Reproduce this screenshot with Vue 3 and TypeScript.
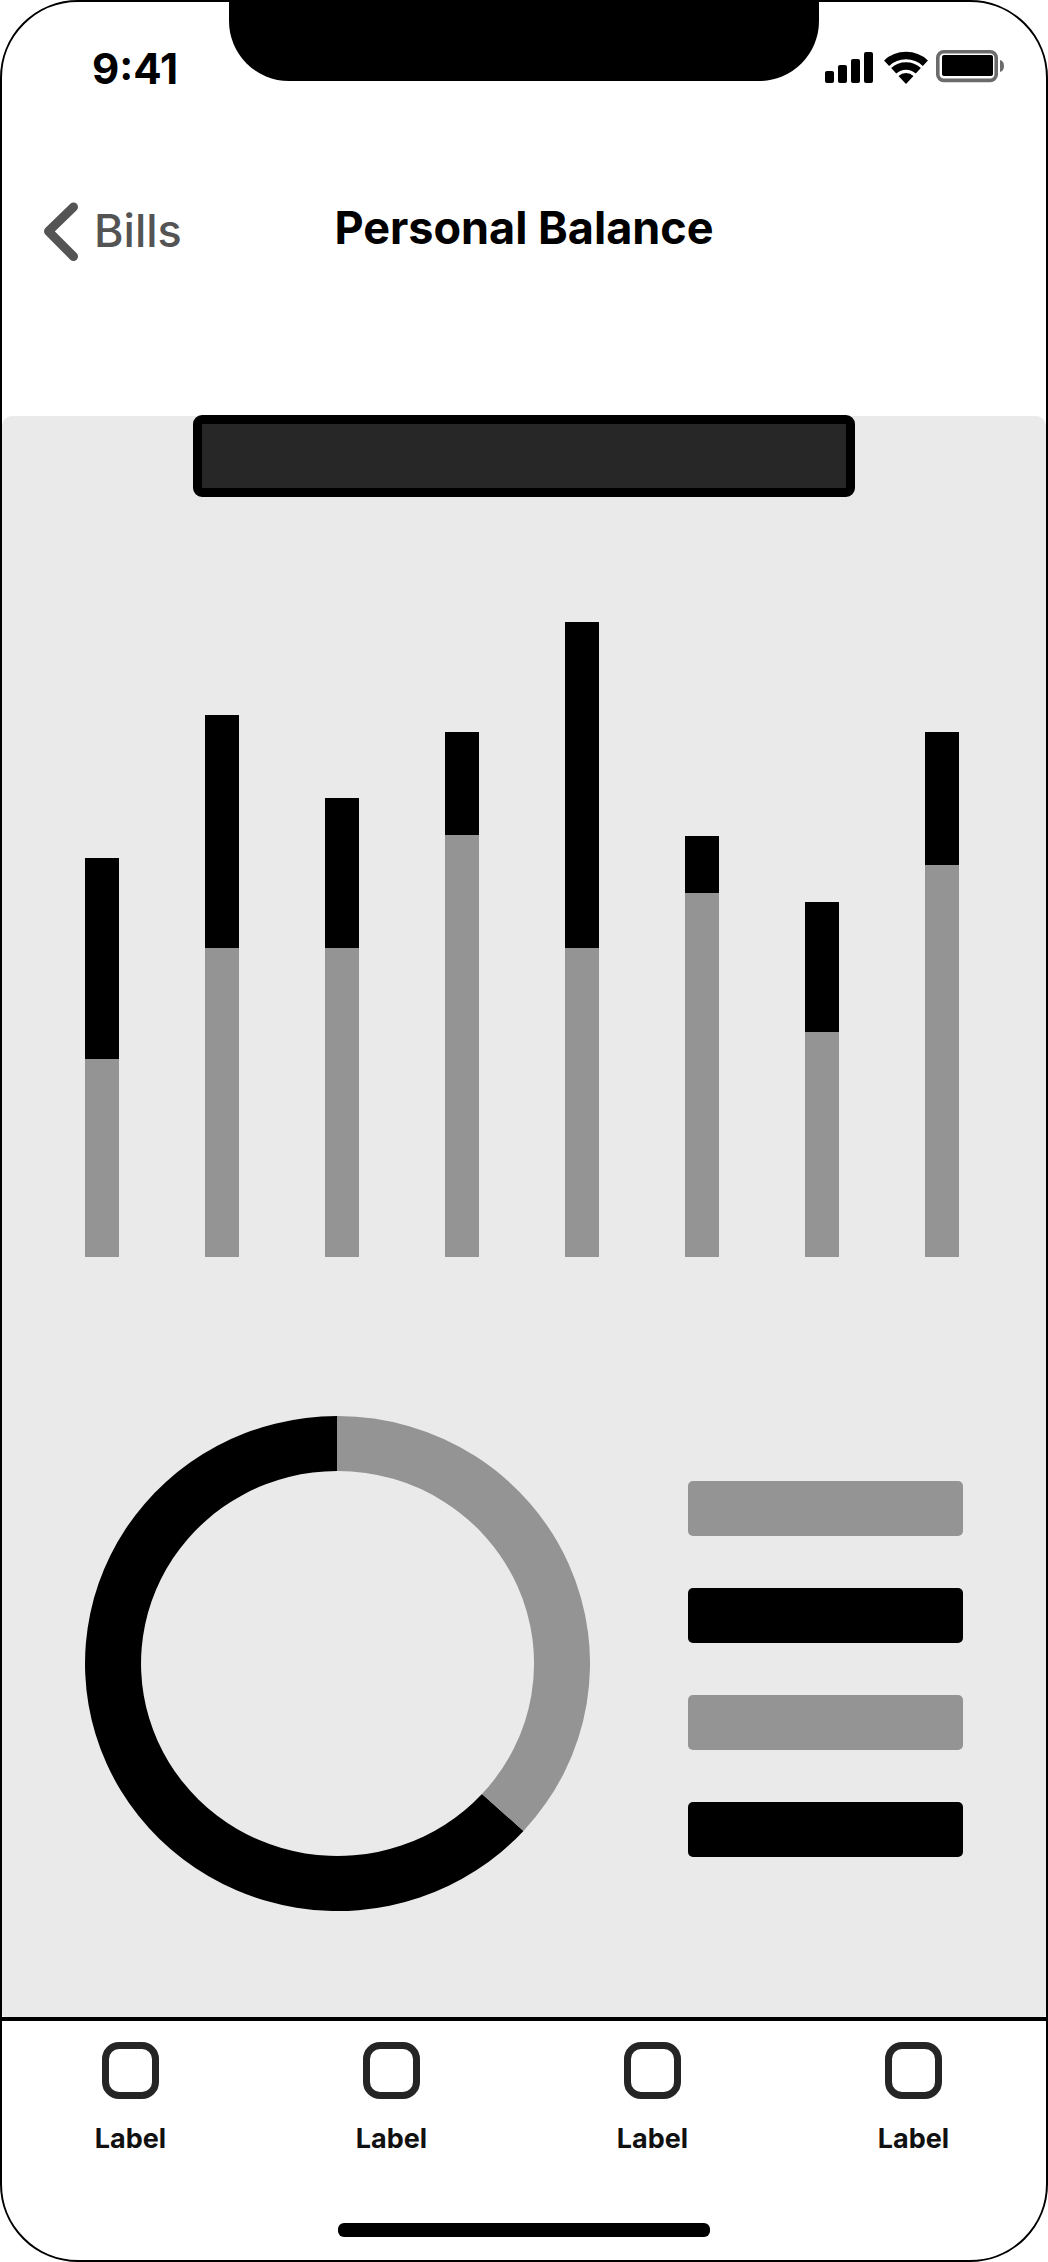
<script setup lang="ts">
interface Bar {
  spent: number
  saved: number
}

const bars: Bar[] = [
  { spent: 201, saved: 198 },
  { spent: 233, saved: 309 },
  { spent: 150, saved: 309 },
  { spent: 103, saved: 422 },
  { spent: 326, saved: 309 },
  { spent: 57, saved: 364 },
  { spent: 130, saved: 225 },
  { spent: 133, saved: 392 },
]

const legend: string[] = ['light', 'dark', 'light', 'dark']
const tabs: string[] = ['Label', 'Label', 'Label', 'Label']
</script>

<template>
  <div class="phone">
    <header>
      <div class="status">
        <span class="time">9:41</span>
        <div class="notch"></div>
        <svg class="indicators" width="180" height="34" viewBox="0 0 180 34" aria-hidden="true">
          <rect x="0" y="21" width="9" height="12" rx="2" />
          <rect x="13" y="15" width="9" height="18" rx="2" />
          <rect x="26" y="9" width="9" height="24" rx="2" />
          <rect x="39" y="2" width="9" height="31" rx="2" />
          <path d="M61.6 13.2A28.5 28.5 0 0 1 100.4 13.2" fill="none" stroke="#000" stroke-width="7.5" />
          <path d="M68.7 20.8A18 18 0 0 1 93.3 20.8" fill="none" stroke="#000" stroke-width="7.5" />
          <path d="M81 34L73.5 26A11 11 0 0 1 88.5 26Z" />
          <rect x="112.8" y="1.8" width="58.4" height="28.6" rx="6" fill="none" stroke="#6b6b6b" stroke-width="3.6" />
          <rect x="117" y="5" width="51" height="21" rx="2" />
          <path d="M175 10Q179 11 179 16T175 22Z" fill="#6b6b6b" />
        </svg>
      </div>
      <nav class="nav">
        <a class="back" href="#">
          <svg width="36" height="60" viewBox="0 0 36 60" aria-hidden="true">
            <path d="M31.5 6L6.5 30.3L31.5 55.5" fill="none" stroke="#545454" stroke-width="9" stroke-linecap="round" stroke-linejoin="round" />
          </svg>
          <span>Bills</span>
        </a>
        <h1>Personal Balance</h1>
      </nav>
    </header>

    <main>
      <div class="banner"></div>
      <div class="chart">
        <div v-for="(bar, i) in bars" :key="i" class="bar">
          <div class="dark" :style="{ height: bar.spent + 'px' }"></div>
          <div class="light" :style="{ height: bar.saved + 'px' }"></div>
        </div>
      </div>
      <div class="summary">
        <svg class="donut" viewBox="0 0 505 495" aria-hidden="true">
          <path d="M252 0A252.5 247.5 0 1 0 438.5 414.9L397 378A196.5 192.5 0 1 1 252 55Z" />
          <path fill="#949494" d="M252 0A252.5 247.5 0 0 1 438.5 414.9L397 378A196.5 192.5 0 0 0 252 55Z" />
        </svg>
        <ul class="legend">
          <li v-for="(tone, i) in legend" :key="i" :class="tone"></li>
        </ul>
      </div>
    </main>

    <footer>
      <div class="tabs">
        <button v-for="(tab, i) in tabs" :key="i" type="button" class="tab">
          <span class="glyph"></span>
          <span>{{ tab }}</span>
        </button>
      </div>
      <div class="home"></div>
    </footer>
  </div>
</template>

<style>
body {
  margin: 0;
  background: #fff;
}
</style>

<style scoped>
.phone {
  box-sizing: border-box;
  display: flex;
  flex-direction: column;
  min-height: 100vh;
  border: 2px solid #000;
  border-radius: 78px;
  background: #fff;
  color: #000;
  font-family: Inter, "Liberation Sans", sans-serif;
}

.status {
  display: grid;
  grid-template-columns: 1fr 590px 1fr;
  align-items: start;
}

.time {
  padding: 42px 0 0 90px;
  font-size: 42px;
  font-weight: 700;
  line-height: 50px;
}

.notch {
  height: 79px;
  border-radius: 0 0 60px 60px;
  background: #000;
}

.indicators {
  justify-self: end;
  margin: 48px 41px 0 0;
}

.nav {
  display: grid;
  grid-template-columns: 1fr auto 1fr;
  align-items: center;
  margin-top: -13px;
  padding: 120px 40px 155px;
}

.back {
  display: flex;
  align-items: center;
  gap: 16px;
  color: #545454;
  font-size: 45px;
  font-weight: 500;
  line-height: 60px;
  text-decoration: none;
}

h1 {
  margin: 0;
  padding-bottom: 6px;
  font-size: 45px;
  font-weight: 700;
  line-height: 54px;
}

main {
  flex: 1;
  padding-bottom: 106px;
  border-radius: 10px 10px 4px 4px;
  background: #eaeaea;
}

.banner {
  box-sizing: border-box;
  width: 662px;
  max-width: 100%;
  height: 82px;
  margin: -1px auto 0;
  border: 9px solid #000;
  border-radius: 9px;
  background: #272727;
}

.chart {
  display: flex;
  align-items: flex-end;
  justify-content: space-between;
  margin-top: 125px;
  padding: 0 87px 0 83px;
}

.bar {
  width: 34px;
}

.dark {
  background: #000;
}

.light {
  background: #949494;
}

.summary {
  display: flex;
  align-items: flex-start;
  gap: 98px;
  margin-top: 159px;
  padding: 0 83px;
}

.donut {
  flex: 505 1 0;
  min-width: 0;
}

.legend {
  display: grid;
  flex: 275 1 0;
  gap: 52px;
  margin: 0;
  padding: 65px 0 0;
  list-style: none;
}

.legend li {
  height: 55px;
  border-radius: 5px;
}

footer {
  padding-bottom: 23px;
  border-top: 4px solid #000;
}

.tabs {
  display: grid;
  grid-template-columns: repeat(4, 1fr);
  padding-top: 21px;
}

.tab {
  display: flex;
  flex-direction: column;
  align-items: center;
  gap: 23px;
  padding: 0 4px 0 0;
  border: 0;
  background: none;
  color: #111;
  font-family: inherit;
  font-size: 27px;
  font-weight: 700;
  line-height: 34px;
}

.glyph {
  box-sizing: border-box;
  width: 57px;
  height: 57px;
  border: 7px solid #252525;
  border-radius: 17px;
}

.home {
  width: 372px;
  height: 14px;
  margin: 67px auto 0;
  border-radius: 6px;
  background: #000;
}
</style>
